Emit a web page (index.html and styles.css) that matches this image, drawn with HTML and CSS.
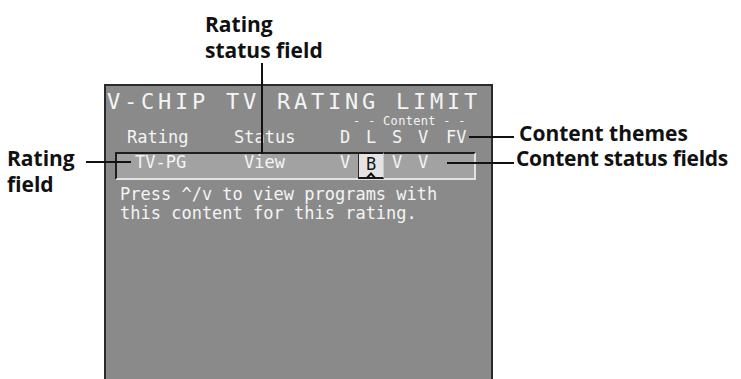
FILE: index.html
```html
<!DOCTYPE html>
<html>
<head>
<meta charset="utf-8">
<link rel="stylesheet" href="styles.css">
</head>
<body>
<div class="figure">
  <div class="screen">
    <div class="title">V-CHIP TV RATING LIMIT</div>
    <div class="subhead">- - Content - -</div>
    <div class="row head">
      <span class="c-rating">Rating</span>
      <span class="c-status">Status</span>
      <span class="c-theme">D</span>
      <span class="c-theme">L</span>
      <span class="c-theme">S</span>
      <span class="c-theme">V</span>
      <span class="c-fv">FV</span>
    </div>
    <div class="row field">
      <span class="c-rating">TV-PG</span>
      <span class="c-status">View</span>
      <span class="c-theme">V</span>
      <span class="c-theme sel">B<svg class="caret" width="10" height="6" viewBox="0 0 10 6"><path d="M1 6 L5 1.5 L9 6" fill="none" stroke="#111" stroke-width="2"/></svg></span>
      <span class="c-theme">V</span>
      <span class="c-theme">V</span>
    </div>
    <div class="help">Press ^/v to view programs with<br>this content for this rating.</div>
  </div>

  <div class="label lbl-status">Rating<br>status field</div>
  <div class="label lbl-rating">Rating<br>field</div>
  <div class="label lbl-themes">Content themes</div>
  <div class="label lbl-fields">Content status fields</div>

  <div class="line v-status"></div>
  <div class="line h-rating"></div>
  <div class="line h-themes"></div>
  <div class="line h-fields"></div>
</div>
</body>
</html>
```

FILE: styles.css
```css
html, body {
  margin: 0;
  padding: 0;
  background: #ffffff;
}

.figure {
  position: relative;
  width: 741px;
  height: 379px;
  overflow: hidden;
  padding-top: 84px;
  box-sizing: border-box;
}

.screen {
  margin-left: 104px;
  width: 389px;
  height: 320px;
  box-sizing: border-box;
  border: 2px solid #2a2a2a;
  background: #8a8a8a;
  color: #f4f4f4;
  font-family: "DejaVu Sans Mono", monospace;
  padding-top: 5px;
  display: flex;
  flex-direction: column;
}

.title {
  font-size: 22px;
  line-height: 22px;
  letter-spacing: 3.75px;
  padding-left: 1px;
  white-space: nowrap;
}

.subhead {
  font-size: 12px;
  line-height: 11px;
  margin-top: 3px;
  padding-left: 247px;
  letter-spacing: 0.3px;
  white-space: pre;
}

.row {
  display: flex;
  font-size: 17px;
  line-height: 17px;
  white-space: nowrap;
}

.head {
  margin-top: 2px;
  margin-left: 11px;
}

.head .c-rating { width: 107px; padding-left: 10px; }
.head .c-status { width: 98px; }

.c-theme {
  width: 26px;
  text-align: center;
}

.c-fv {
  padding-left: 10px;
}

.field {
  margin-top: 6px;
  margin-left: 9px;
  width: 361px;
  height: 28px;
  box-sizing: border-box;
  border-top: 2px solid #1e1e1e;
  border-left: 2px solid #1e1e1e;
  border-right: 2px solid #e2e2e2;
  border-bottom: 2px solid #e2e2e2;
  background: #a2a2a2;
  padding-top: 0;
  align-items: flex-start;
}

.field .c-rating { width: 99px; padding-left: 18px; }
.field .c-status { width: 88px; padding-left: 10px; }

.sel {
  position: relative;
  margin-top: -2px;
  height: 27px;
  box-sizing: border-box;
  border-top: 2px solid #1a1a1a;
  border-left: 1px solid #2a2a2a;
  border-right: 1px solid #c8c8c8;
  border-bottom: 2px solid #1a1a1a;
  background: #e4e4e4;
  color: #151515;
  padding-top: 2px;
}

.caret {
  position: absolute;
  left: 7px;
  bottom: -1px;
}

.help {
  margin-top: 5px;
  margin-left: 14px;
  font-size: 17px;
  line-height: 19px;
  white-space: nowrap;
}

.label {
  position: absolute;
  font-family: "Open Sans", "Noto Sans", sans-serif;
  font-weight: 700;
  font-size: 21px;
  line-height: 26px;
  color: #111111;
  white-space: nowrap;
}

.lbl-status { left: 205px; top: 11px; }
.lbl-rating { left: 7px; top: 145px; }
.lbl-themes { left: 519px; top: 121px; line-height: 25px; }
.lbl-fields { left: 516px; top: 146px; line-height: 25px; letter-spacing: -0.3px; }

.line {
  position: absolute;
  background: #111111;
}

.v-status { left: 261px; top: 63px; width: 2px; height: 91px; }
.h-rating { left: 86px; top: 161px; width: 45px; height: 2px; }
.h-themes { left: 469px; top: 136px; width: 45px; height: 2px; }
.h-fields { left: 447px; top: 162px; width: 67px; height: 2px; }
```
